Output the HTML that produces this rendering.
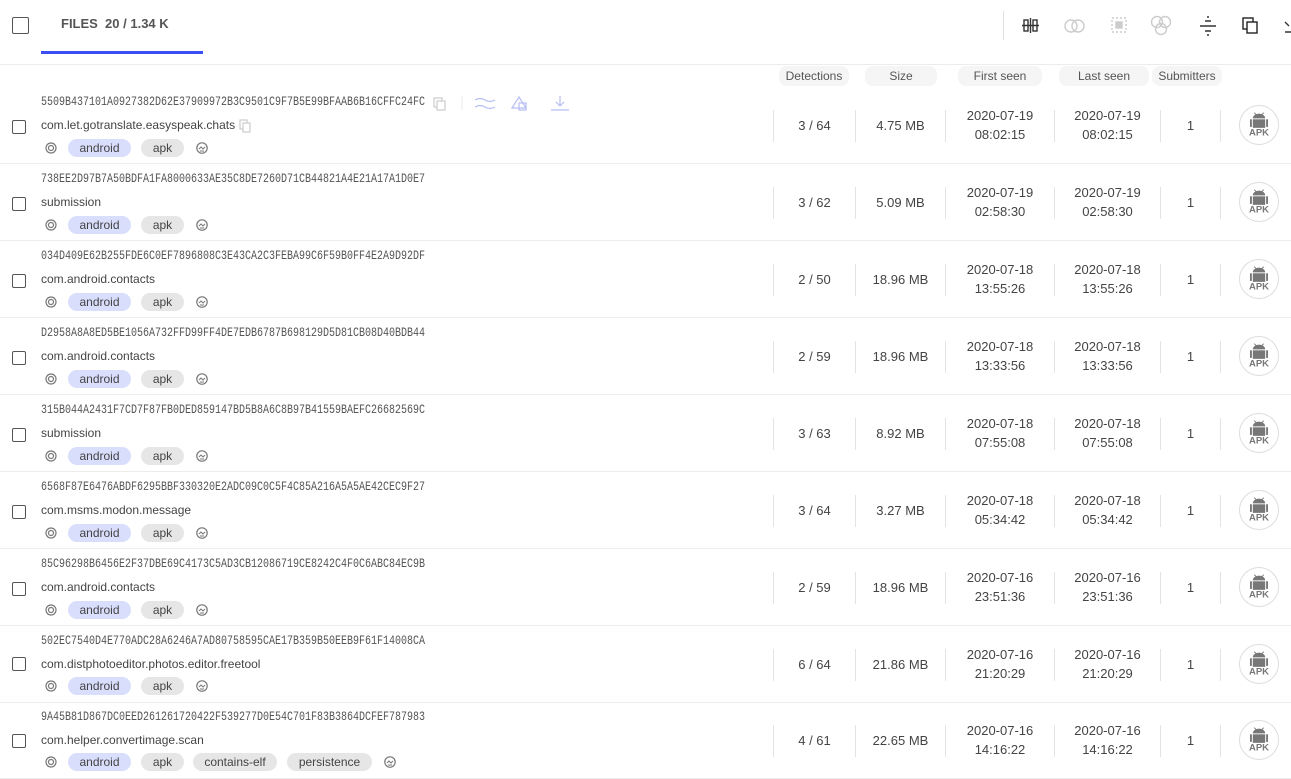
<!DOCTYPE html>
<html><head><meta charset="utf-8"><style>
*{box-sizing:border-box;margin:0;padding:0}
body{width:1291px;height:777px;overflow:hidden;background:#fff;font-family:"Liberation Sans",sans-serif;color:#333;position:relative}
.a{position:absolute}
.cb{position:absolute;width:14px;height:14px;border:1.5px solid #555;border-radius:2px;background:#fff}
.hdr{position:absolute;top:66px;height:20px;background:#f5f5f5;border-radius:8px;font-size:12px;color:#555;text-align:center;line-height:20px}
.row{position:absolute;left:0;width:1291px;height:77px;border-bottom:1px solid #ececec}
.hash{position:absolute;left:41px;top:9px;font-family:"Liberation Mono",monospace;font-size:10px;color:#555;transform:scaleY(1.25);transform-origin:left top;letter-spacing:0}
.name{position:absolute;left:41px;top:31px;font-size:12px;color:#444}
.tag{position:absolute;top:52px;height:18px;border-radius:9px;background:#e6e6e6;font-size:12px;color:#444;text-align:center;line-height:18px}
.tag.b{background:#d9defc}
.sep{position:absolute;top:23px;width:1px;height:32px;background:#e3e3e3}
.num{position:absolute;top:31px;font-size:13px;color:#444;text-align:center}
.dt{position:absolute;top:19px;font-size:13px;color:#444;text-align:center;line-height:19px}
.apk{position:absolute;left:1239px;top:18px;width:40px;height:40px;border:1px solid #ddd;border-radius:50%}
</style></head><body>
<div class="cb" style="left:12px;top:17px;width:17px;height:17px"></div>
<div class="a" style="left:61px;top:16px;font-size:13px;font-weight:bold;color:#555">FILES&nbsp; 20 / 1.34 K</div>
<div class="a" style="left:41px;top:51px;width:162px;height:3px;background:#3b4ff5"></div>
<div class="a" style="left:0;top:64px;width:1291px;height:1px;background:#ececec"></div>
<div class="a" style="left:1003px;top:11px;width:1px;height:29px;background:#e0e0e0"></div>
<svg class="a" style="left:1015px;top:10px" width="276" height="32" viewBox="0 0 276 32" fill="none" stroke-width="1.4">
<g stroke="#333"><rect x="9" y="10" width="4" height="11"/><rect x="18" y="10" width="4" height="11"/><path d="M7 15.5h17M15.5 8v15"/></g>
<g stroke="#ccc"><circle cx="56" cy="16" r="6"/><circle cx="63" cy="16" r="6"/></g>
<g stroke="#ccc"><rect x="97" y="8" width="14" height="14" stroke-dasharray="2 2"/><rect x="101" y="12" width="6" height="6" fill="#ccc"/></g>
<g stroke="#ccc"><circle cx="142" cy="12" r="5.5"/><circle cx="150" cy="12" r="5.5"/><circle cx="146" cy="19" r="5.5"/></g>
<g stroke="#333"><path d="M185 16h16M190 11h6M190 21h6M192 7h2M192 25h2"/></g>
<g stroke="#222"><rect x="228" y="8" width="10" height="11"/><rect x="232" y="12" width="10" height="11" fill="#fff"/></g>
<g stroke="#333"><path d="M270 12l4 4M270 22h6"/></g>
</svg>
<div class="hdr" style="left:779px;width:70px">Detections</div>
<div class="hdr" style="left:865px;width:72px">Size</div>
<div class="hdr" style="left:958px;width:84px">First seen</div>
<div class="hdr" style="left:1059px;width:90px">Last seen</div>
<div class="hdr" style="left:1152px;width:70px">Submitters</div>

<svg width="0" height="0" style="position:absolute"><defs>
<g id="ic1"><circle cx="6" cy="6" r="5" fill="none" stroke="#777" stroke-width="1.2"/><circle cx="6" cy="6" r="2.5" fill="none" stroke="#777" stroke-width="1.2"/></g>
<g id="ic2"><circle cx="6" cy="6" r="5.2" fill="none" stroke="#777" stroke-width="1.2"/><path d="M3 7l2-2 2 2 2-2M4 9h4" stroke="#777" fill="none" stroke-width="1"/></g>
<g id="apk"><path d="M15 7l2 2M25 7l-2 2" stroke="#777" stroke-width="1"/><path d="M13.5 13a6.5 5 0 0 1 13 0z" fill="#777"/><rect x="13.5" y="14" width="13" height="9" fill="#777"/><rect x="10.5" y="14" width="2" height="8" fill="#777"/><rect x="27.5" y="14" width="2" height="8" fill="#777"/><text x="20" y="31" text-anchor="middle" font-family="Liberation Sans" font-weight="bold" font-size="10" fill="#777">APK</text></g>
</defs></svg>

<div class="row" style="top:87px">
<div class="hash">5509B437101A0927382D62E37909972B3C9501C9F7B5E99BFAAB6B16CFFC24FC</div>
<svg class="a" style="left:432px;top:9px" width="150" height="18" fill="none" stroke-width="1.2"><g stroke="#ccc"><rect x="2" y="2" width="8" height="9"/><rect x="5" y="5" width="8" height="9" fill="#fff"/></g><path d="M30 0v14" stroke="#eee"/><g stroke="#b6bff5"><path d="M43 4q5-3 10 0t10 0M43 11q5-3 10 0t10 0"/><path d="M87 1l7 11h-14z"/><rect x="87" y="7" width="7" height="7"/><path d="M128 0v10M124 6l4 4 4-4M119 14h18"/></g></svg>
<div class="name">com.let.gotranslate.easyspeak.chats</div>
<svg class="a" style="left:239px;top:32px" width="14" height="14" fill="none" stroke="#ccc" stroke-width="1.2"><rect x="1" y="1" width="7" height="9"/><rect x="4" y="4" width="7" height="9" fill="#fff"/></svg>
<div class="cb" style="left:12px;top:33px"></div>
<svg class="a" style="left:45px;top:55px" width="12" height="12"><use href="#ic1"/></svg>
<div class="tag b" style="left:68px;width:63px">android</div><div class="tag" style="left:141px;width:43px">apk</div>
<svg class="a" style="left:196px;top:55px" width="12" height="12"><use href="#ic2"/></svg>
<div class="sep" style="left:773px"></div><div class="sep" style="left:855px"></div><div class="sep" style="left:945px"></div><div class="sep" style="left:1054px"></div><div class="sep" style="left:1160px"></div><div class="sep" style="left:1220px"></div>
<div class="num" style="left:774px;width:81px">3 / 64</div><div class="num" style="left:856px;width:89px">4.75 MB</div>
<div class="dt" style="left:946px;width:108px">2020-07-19<br>08:02:15</div><div class="dt" style="left:1055px;width:105px">2020-07-19<br>08:02:15</div>
<div class="num" style="left:1161px;width:59px">1</div>
<svg class="apk" viewBox="0 0 40 40"><use href="#apk"/></svg>
</div>

<div class="row" style="top:164px">
<div class="hash">738EE2D97B7A50BDFA1FA8000633AE35C8DE7260D71CB44821A4E21A17A1D0E7</div>
<div class="name">submission</div>
<div class="cb" style="left:12px;top:33px"></div>
<svg class="a" style="left:45px;top:55px" width="12" height="12"><use href="#ic1"/></svg>
<div class="tag b" style="left:68px;width:63px">android</div><div class="tag" style="left:141px;width:43px">apk</div>
<svg class="a" style="left:196px;top:55px" width="12" height="12"><use href="#ic2"/></svg>
<div class="sep" style="left:773px"></div><div class="sep" style="left:855px"></div><div class="sep" style="left:945px"></div><div class="sep" style="left:1054px"></div><div class="sep" style="left:1160px"></div><div class="sep" style="left:1220px"></div>
<div class="num" style="left:774px;width:81px">3 / 62</div><div class="num" style="left:856px;width:89px">5.09 MB</div>
<div class="dt" style="left:946px;width:108px">2020-07-19<br>02:58:30</div><div class="dt" style="left:1055px;width:105px">2020-07-19<br>02:58:30</div>
<div class="num" style="left:1161px;width:59px">1</div>
<svg class="apk" viewBox="0 0 40 40"><use href="#apk"/></svg>
</div>

<div class="row" style="top:241px">
<div class="hash">034D409E62B255FDE6C0EF7896808C3E43CA2C3FEBA99C6F59B0FF4E2A9D92DF</div>
<div class="name">com.android.contacts</div>
<div class="cb" style="left:12px;top:33px"></div>
<svg class="a" style="left:45px;top:55px" width="12" height="12"><use href="#ic1"/></svg>
<div class="tag b" style="left:68px;width:63px">android</div><div class="tag" style="left:141px;width:43px">apk</div>
<svg class="a" style="left:196px;top:55px" width="12" height="12"><use href="#ic2"/></svg>
<div class="sep" style="left:773px"></div><div class="sep" style="left:855px"></div><div class="sep" style="left:945px"></div><div class="sep" style="left:1054px"></div><div class="sep" style="left:1160px"></div><div class="sep" style="left:1220px"></div>
<div class="num" style="left:774px;width:81px">2 / 50</div><div class="num" style="left:856px;width:89px">18.96 MB</div>
<div class="dt" style="left:946px;width:108px">2020-07-18<br>13:55:26</div><div class="dt" style="left:1055px;width:105px">2020-07-18<br>13:55:26</div>
<div class="num" style="left:1161px;width:59px">1</div>
<svg class="apk" viewBox="0 0 40 40"><use href="#apk"/></svg>
</div>

<div class="row" style="top:318px">
<div class="hash">D2958A8A8ED5BE1056A732FFD99FF4DE7EDB6787B698129D5D81CB08D40BDB44</div>
<div class="name">com.android.contacts</div>
<div class="cb" style="left:12px;top:33px"></div>
<svg class="a" style="left:45px;top:55px" width="12" height="12"><use href="#ic1"/></svg>
<div class="tag b" style="left:68px;width:63px">android</div><div class="tag" style="left:141px;width:43px">apk</div>
<svg class="a" style="left:196px;top:55px" width="12" height="12"><use href="#ic2"/></svg>
<div class="sep" style="left:773px"></div><div class="sep" style="left:855px"></div><div class="sep" style="left:945px"></div><div class="sep" style="left:1054px"></div><div class="sep" style="left:1160px"></div><div class="sep" style="left:1220px"></div>
<div class="num" style="left:774px;width:81px">2 / 59</div><div class="num" style="left:856px;width:89px">18.96 MB</div>
<div class="dt" style="left:946px;width:108px">2020-07-18<br>13:33:56</div><div class="dt" style="left:1055px;width:105px">2020-07-18<br>13:33:56</div>
<div class="num" style="left:1161px;width:59px">1</div>
<svg class="apk" viewBox="0 0 40 40"><use href="#apk"/></svg>
</div>

<div class="row" style="top:395px">
<div class="hash">315B044A2431F7CD7F87FB0DED859147BD5B8A6C8B97B41559BAEFC26682569C</div>
<div class="name">submission</div>
<div class="cb" style="left:12px;top:33px"></div>
<svg class="a" style="left:45px;top:55px" width="12" height="12"><use href="#ic1"/></svg>
<div class="tag b" style="left:68px;width:63px">android</div><div class="tag" style="left:141px;width:43px">apk</div>
<svg class="a" style="left:196px;top:55px" width="12" height="12"><use href="#ic2"/></svg>
<div class="sep" style="left:773px"></div><div class="sep" style="left:855px"></div><div class="sep" style="left:945px"></div><div class="sep" style="left:1054px"></div><div class="sep" style="left:1160px"></div><div class="sep" style="left:1220px"></div>
<div class="num" style="left:774px;width:81px">3 / 63</div><div class="num" style="left:856px;width:89px">8.92 MB</div>
<div class="dt" style="left:946px;width:108px">2020-07-18<br>07:55:08</div><div class="dt" style="left:1055px;width:105px">2020-07-18<br>07:55:08</div>
<div class="num" style="left:1161px;width:59px">1</div>
<svg class="apk" viewBox="0 0 40 40"><use href="#apk"/></svg>
</div>

<div class="row" style="top:472px">
<div class="hash">6568F87E6476ABDF6295BBF330320E2ADC09C0C5F4C85A216A5A5AE42CEC9F27</div>
<div class="name">com.msms.modon.message</div>
<div class="cb" style="left:12px;top:33px"></div>
<svg class="a" style="left:45px;top:55px" width="12" height="12"><use href="#ic1"/></svg>
<div class="tag b" style="left:68px;width:63px">android</div><div class="tag" style="left:141px;width:43px">apk</div>
<svg class="a" style="left:196px;top:55px" width="12" height="12"><use href="#ic2"/></svg>
<div class="sep" style="left:773px"></div><div class="sep" style="left:855px"></div><div class="sep" style="left:945px"></div><div class="sep" style="left:1054px"></div><div class="sep" style="left:1160px"></div><div class="sep" style="left:1220px"></div>
<div class="num" style="left:774px;width:81px">3 / 64</div><div class="num" style="left:856px;width:89px">3.27 MB</div>
<div class="dt" style="left:946px;width:108px">2020-07-18<br>05:34:42</div><div class="dt" style="left:1055px;width:105px">2020-07-18<br>05:34:42</div>
<div class="num" style="left:1161px;width:59px">1</div>
<svg class="apk" viewBox="0 0 40 40"><use href="#apk"/></svg>
</div>

<div class="row" style="top:549px">
<div class="hash">85C96298B6456E2F37DBE69C4173C5AD3CB12086719CE8242C4F0C6ABC84EC9B</div>
<div class="name">com.android.contacts</div>
<div class="cb" style="left:12px;top:33px"></div>
<svg class="a" style="left:45px;top:55px" width="12" height="12"><use href="#ic1"/></svg>
<div class="tag b" style="left:68px;width:63px">android</div><div class="tag" style="left:141px;width:43px">apk</div>
<svg class="a" style="left:196px;top:55px" width="12" height="12"><use href="#ic2"/></svg>
<div class="sep" style="left:773px"></div><div class="sep" style="left:855px"></div><div class="sep" style="left:945px"></div><div class="sep" style="left:1054px"></div><div class="sep" style="left:1160px"></div><div class="sep" style="left:1220px"></div>
<div class="num" style="left:774px;width:81px">2 / 59</div><div class="num" style="left:856px;width:89px">18.96 MB</div>
<div class="dt" style="left:946px;width:108px">2020-07-16<br>23:51:36</div><div class="dt" style="left:1055px;width:105px">2020-07-16<br>23:51:36</div>
<div class="num" style="left:1161px;width:59px">1</div>
<svg class="apk" viewBox="0 0 40 40"><use href="#apk"/></svg>
</div>

<div class="row" style="top:626px">
<div class="hash">502EC7540D4E770ADC28A6246A7AD80758595CAE17B359B50EEB9F61F14008CA</div>
<div class="name">com.distphotoeditor.photos.editor.freetool</div>
<div class="cb" style="left:12px;top:31px"></div>
<svg class="a" style="left:45px;top:54px" width="12" height="12"><use href="#ic1"/></svg>
<div class="tag b" style="left:68px;width:63px;top:51px">android</div><div class="tag" style="left:141px;width:43px;top:51px">apk</div>
<svg class="a" style="left:196px;top:54px" width="12" height="12"><use href="#ic2"/></svg>
<div class="sep" style="left:773px"></div><div class="sep" style="left:855px"></div><div class="sep" style="left:945px"></div><div class="sep" style="left:1054px"></div><div class="sep" style="left:1160px"></div><div class="sep" style="left:1220px"></div>
<div class="num" style="left:774px;width:81px">6 / 64</div><div class="num" style="left:856px;width:89px">21.86 MB</div>
<div class="dt" style="left:946px;width:108px">2020-07-16<br>21:20:29</div><div class="dt" style="left:1055px;width:105px">2020-07-16<br>21:20:29</div>
<div class="num" style="left:1161px;width:59px">1</div>
<svg class="apk" viewBox="0 0 40 40"><use href="#apk"/></svg>
</div>

<div class="row" style="top:702px">
<div class="hash">9A45B81D867DC0EED261261720422F539277D0E54C701F83B3864DCFEF787983</div>
<div class="name">com.helper.convertimage.scan</div>
<div class="cb" style="left:12px;top:32px"></div>
<svg class="a" style="left:45px;top:54px" width="12" height="12"><use href="#ic1"/></svg>
<div class="tag b" style="left:68px;width:63px;top:51px">android</div><div class="tag" style="left:141px;width:43px;top:51px">apk</div>
<div class="tag" style="left:193px;width:84px;top:51px">contains-elf</div><div class="tag" style="left:287px;width:85px;top:51px">persistence</div>
<svg class="a" style="left:384px;top:54px" width="12" height="12"><use href="#ic2"/></svg>
<div class="sep" style="left:773px"></div><div class="sep" style="left:855px"></div><div class="sep" style="left:945px"></div><div class="sep" style="left:1054px"></div><div class="sep" style="left:1160px"></div><div class="sep" style="left:1220px"></div>
<div class="num" style="left:774px;width:81px">4 / 61</div><div class="num" style="left:856px;width:89px">22.65 MB</div>
<div class="dt" style="left:946px;width:108px">2020-07-16<br>14:16:22</div><div class="dt" style="left:1055px;width:105px">2020-07-16<br>14:16:22</div>
<div class="num" style="left:1161px;width:59px">1</div>
<svg class="apk" viewBox="0 0 40 40"><use href="#apk"/></svg>
</div>
</body></html>
